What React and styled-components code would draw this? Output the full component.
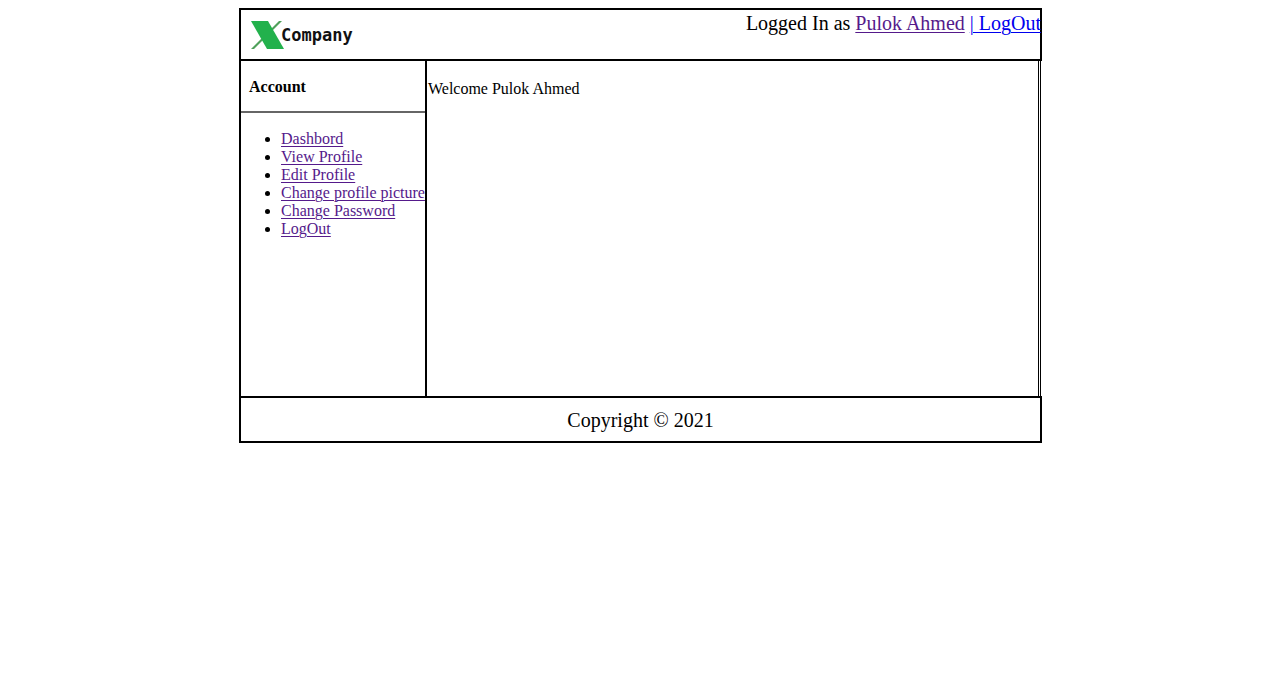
import React from "react";
import styled, { createGlobalStyle } from "styled-components";

const GlobalStyle = createGlobalStyle`
  * { box-sizing: border-box; }
  body {
    margin: 0;
    padding: 8px 8px 8px 9px;
    background: #fff;
    color: #000;
    font: 16px/18px "Liberation Serif", "Times New Roman", serif;
  }
`;

const Page = styled.div`
  width: 100%;
  max-width: 803px;
  margin: 0 auto;
`;

const Header = styled.header`
  display: flex;
  justify-content: space-between;
  align-items: flex-start;
  min-height: 53px;
  border: 2px solid #000;
`;

const Logo = styled.div`
  display: flex;
  align-items: center;
  padding: 11px 0 0 10px;
`;

const LogoMark = styled.svg`
  display: block;
  width: 34px;
  height: 28px;
  margin-right: -4px;
`;

const LogoText = styled.span`
  font: bold 17px/28px "DejaVu Sans Mono", monospace;
  color: #111;
`;

const Session = styled.nav`
  font-size: 20px;
  line-height: 26px;
  white-space: nowrap;
  margin-right: -1px;
`;

const Link = styled.a`
  color: ${(p) => (p.$fresh ? "#0000ee" : "#551a8b")};
  text-decoration: underline;
  text-decoration-thickness: 1px;
  text-underline-offset: 2px;
`;

const Body = styled.div`
  display: flex;
  min-height: 335px;
  margin-right: 1px;
  border-left: 2px solid #000;
  border-right: 3px double #000;
`;

const Sidebar = styled.aside`
  flex: none;
  border-right: 2px solid #000;
`;

const SidebarTitle = styled.h2`
  margin: 0;
  padding: 17px 8px 15px;
  font-size: 16px;
  line-height: 18px;
  border-bottom: 2px solid #666;
`;

const Menu = styled.ul`
  margin: 17px 0 16px;
  padding: 0 0 0 40px;
  white-space: nowrap;
`;

const Main = styled.main`
  flex: 1;
  padding: 19px 1px;
`;

const Greeting = styled.p`
  margin: 0;
`;

const Footer = styled.footer`
  border: 2px solid #000;
  padding: 11px 0 9px;
  font-size: 20px;
  line-height: 23px;
  text-align: center;
`;

const menuItems = [
  "Dashbord",
  "View Profile",
  "Edit Profile",
  "Change profile picture",
  "Change Password",
  "LogOut",
];

export default function App() {
  return (
    <>
      <GlobalStyle />
      <Page>
        <Header>
          <Logo>
            <LogoMark viewBox="0 0 34 28" aria-hidden="true">
              <path d="M28 0H31L3 28H0Z" fill="#4fa05a" />
              <path d="M0 0H17L33 28H16Z" fill="#22b14c" />
            </LogoMark>
            <LogoText>Company</LogoText>
          </Logo>
          <Session>
            Logged In as <Link href="#profile">Pulok Ahmed</Link>{" "}
            <Link href="#logout" $fresh>| LogOut</Link>
          </Session>
        </Header>
        <Body>
          <Sidebar>
            <SidebarTitle>Account</SidebarTitle>
            <Menu>
              {menuItems.map((item) => (
                <li key={item}>
                  <Link href={"#" + item.toLowerCase().replace(/ /g, "-")}>{item}</Link>
                </li>
              ))}
            </Menu>
          </Sidebar>
          <Main>
            <Greeting>Welcome Pulok Ahmed</Greeting>
          </Main>
        </Body>
        <Footer>Copyright © 2021</Footer>
      </Page>
    </>
  );
}
